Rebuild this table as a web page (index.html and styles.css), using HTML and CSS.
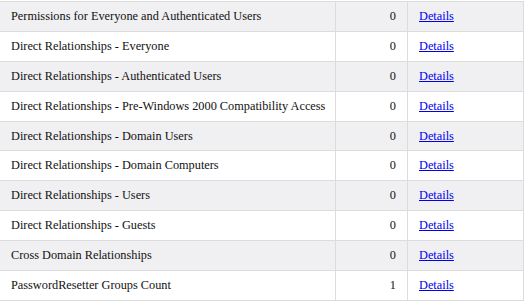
FILE: index.html
```html
<!DOCTYPE html>
<html lang="en">
<head>
    <meta charset="UTF-8">
    <title>Report Summary</title>
    <link rel="stylesheet" href="styles.css">
</head>
<body>
    <table class="summary">
        <colgroup>
            <col class="col-name">
            <col class="col-count">
            <col class="col-link">
        </colgroup>
        <tr><td class="name">Permissions for Everyone and Authenticated Users</td><td class="count">0</td><td class="link"><a href="#">Details</a></td></tr>
        <tr><td class="name">Direct Relationships - Everyone</td><td class="count">0</td><td class="link"><a href="#">Details</a></td></tr>
        <tr><td class="name">Direct Relationships - Authenticated Users</td><td class="count">0</td><td class="link"><a href="#">Details</a></td></tr>
        <tr><td class="name">Direct Relationships - Pre-Windows 2000 Compatibility Access</td><td class="count">0</td><td class="link"><a href="#">Details</a></td></tr>
        <tr><td class="name">Direct Relationships - Domain Users</td><td class="count">0</td><td class="link"><a href="#">Details</a></td></tr>
        <tr><td class="name">Direct Relationships - Domain Computers</td><td class="count">0</td><td class="link"><a href="#">Details</a></td></tr>
        <tr><td class="name">Direct Relationships - Users</td><td class="count">0</td><td class="link"><a href="#">Details</a></td></tr>
        <tr><td class="name">Direct Relationships - Guests</td><td class="count">0</td><td class="link"><a href="#">Details</a></td></tr>
        <tr><td class="name">Cross Domain Relationships</td><td class="count">0</td><td class="link"><a href="#">Details</a></td></tr>
        <tr><td class="name">PasswordResetter Groups Count</td><td class="count">1</td><td class="link"><a href="#">Details</a></td></tr>
    </table>
</body>
</html>
```

FILE: styles.css
```css
body {
    margin: 0;
    padding-top: 1px;
    background: white;
    font-family: "Liberation Serif", "Times New Roman", Times, serif;
    font-size: 12.3px;
    color: #111;
}
.summary {
    border-collapse: collapse;
    table-layout: fixed;
    width: 524px;
    margin-left: -1px;
    font-size: inherit;
}
.col-name {
    width: 336px;
}
.col-count {
    width: 72px;
}
.col-link {
    width: 116px;
}
.summary td {
    border: 1px solid #dcdcdc;
    padding: 0 11px;
    height: 28.9px;
    white-space: nowrap;
    overflow: hidden;
}
.summary tr:nth-child(odd) td {
    background: #f0f0f2;
}
.count {
    text-align: right;
}
.link a {
    color: #0000ee;
}
```
